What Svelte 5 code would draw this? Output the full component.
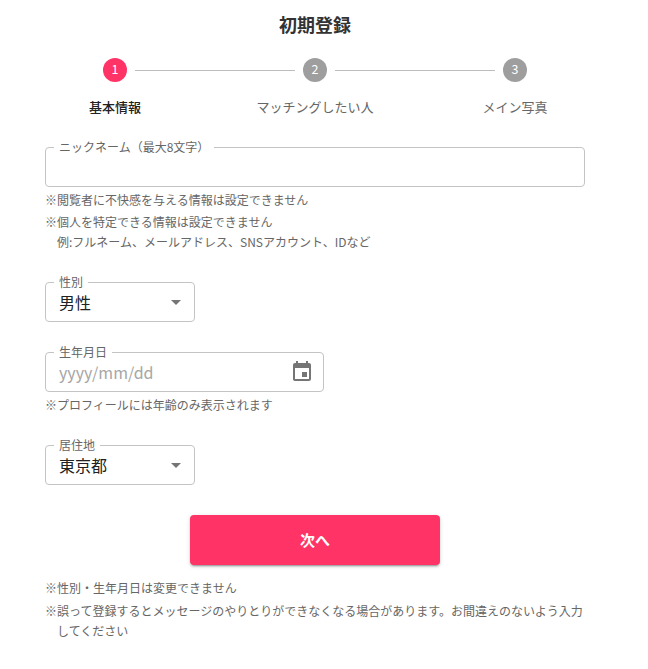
<script>
  const steps = ['基本情報', 'マッチングしたい人', 'メイン写真'];
  let nickname = $state('');
  let birthday = $state('');
</script>

<main>
  <h1>初期登録</h1>

  <ol class="stepper">
    {#each steps as label, i}
      <li class:active={i === 0}>
        <div class="track">
          <span class="line" class:hidden={i === 0}></span>
          <span class="circle">{i + 1}</span>
          <span class="line" class:hidden={i === steps.length - 1}></span>
        </div>
        <span class="label">{label}</span>
      </li>
    {/each}
  </ol>

  <form>
    <fieldset>
      <legend>ニックネーム（最大8文字）</legend>
      <div class="control"><input type="text" aria-label="ニックネーム" bind:value={nickname} /></div>
    </fieldset>
    <p class="note first">※閲覧者に不快感を与える情報は設定できません</p>
    <p class="note second">※個人を特定できる情報は設定できません<br />例:フルネーム、メールアドレス、SNSアカウント、IDなど</p>

    <fieldset class="select">
      <legend>性別</legend>
      <div class="control">
        <span class="value">男性</span>
        <svg viewBox="0 0 24 24" width="24" height="24"><path d="M7 10l5 5 5-5z" /></svg>
      </div>
    </fieldset>

    <fieldset class="date">
      <legend>生年月日</legend>
      <div class="control">
        <input type="text" placeholder="yyyy/mm/dd" aria-label="生年月日" bind:value={birthday} />
        <svg viewBox="0 0 24 24" width="24" height="24"><path d="M17 12h-5v5h5v-5zM16 1v2H8V1H6v2H5c-1.11 0-1.99.9-1.99 2L3 19c0 1.1.89 2 2 2h14c1.1 0 2-.9 2-2V5c0-1.1-.9-2-2-2h-1V1h-2zm3 18H5V8h14v11z" /></svg>
      </div>
    </fieldset>
    <p class="note first">※プロフィールには年齢のみ表示されます</p>

    <fieldset class="select">
      <legend>居住地</legend>
      <div class="control">
        <span class="value">東京都</span>
        <svg viewBox="0 0 24 24" width="24" height="24"><path d="M7 10l5 5 5-5z" /></svg>
      </div>
    </fieldset>

    <button type="button">次へ</button>

    <p class="note">※性別・生年月日は変更できません</p>
    <p class="note last">※誤って登録するとメッセージのやりとりができなくなる場合があります。お間違えのないよう入力してください</p>
  </form>
</main>

<style>
  :global(body) {
    background: #fff;
  }
  main {
    box-sizing: border-box;
    width: 630px;
    height: 669px;
    padding: 10px 15px 0;
    font-family: 'Noto Sans CJK JP', sans-serif;
    color: #333;
  }
  h1 {
    margin: 0;
    font-size: 18px;
    line-height: 28px;
    font-weight: 700;
    text-align: center;
  }
  .stepper {
    display: flex;
    margin: 20px 0 0;
    padding: 0;
    list-style: none;
  }
  li {
    flex: 1;
    text-align: center;
  }
  .track {
    display: flex;
    align-items: center;
    gap: 8px;
    height: 24px;
  }
  .line {
    flex: 1;
    height: 1px;
    background: #bdbdbd;
  }
  .hidden {
    visibility: hidden;
  }
  .circle {
    width: 24px;
    height: 24px;
    border-radius: 50%;
    background: #9e9e9e;
    color: #fff;
    font-size: 12.5px;
    line-height: 22px;
  }
  .label {
    display: block;
    margin-top: 15px;
    font-size: 13px;
    line-height: 19px;
    color: #666;
  }
  .active .circle {
    background: #ff3366;
  }
  .active .label {
    font-weight: 500;
    color: #212121;
  }
  form {
    margin: 31px 30px 0;
  }
  fieldset {
    box-sizing: border-box;
    height: 40px;
    min-width: 0;
    margin: 0;
    padding: 0;
    border: 1px solid #c4c4c4;
    border-radius: 4px;
  }
  /* a collapsed legend keeps the label centred on the outline */
  legend {
    height: 1px;
    margin-left: 8px;
    padding: 0 5px;
    font-size: 12px;
    line-height: 0;
    color: #666;
    white-space: nowrap;
  }
  .control {
    display: flex;
    align-items: center;
    height: 38px;
    padding: 0 6px 0 13px;
    font-size: 16px;
    color: #212121;
  }
  .value {
    flex: 1;
    line-height: 24px;
  }
  input {
    flex: 1;
    min-width: 0;
    height: 24px;
    margin: 0;
    padding: 0;
    border: 0;
    outline: 0;
    background: none;
    font: inherit;
    color: inherit;
  }
  input::placeholder {
    color: #a6a6a6;
    opacity: 1;
  }
  svg {
    flex: none;
    fill: #757575;
  }
  .select {
    width: 150px;
    margin-top: 30px;
  }
  .date {
    width: 279px;
    margin-top: 30px;
  }
  .date .control {
    padding-right: 9px;
  }
  .note {
    margin: 0;
    padding-left: 12px;
    text-indent: -12px;
    font-size: 12px;
    line-height: 20px;
    color: #666;
  }
  .first {
    margin-top: 3px;
  }
  .second {
    margin-top: 2px;
  }
  .last {
    margin-top: 3px;
  }
  button {
    display: block;
    width: 250px;
    height: 50px;
    margin: 30px auto 13px;
    padding: 0;
    border: 0;
    border-radius: 4px;
    background: #ff3366;
    box-shadow: 0 3px 1px -2px rgba(0, 0, 0, 0.2), 0 2px 2px rgba(0, 0, 0, 0.14), 0 1px 5px rgba(0, 0, 0, 0.12);
    font: 700 15px/50px 'Noto Sans CJK JP', sans-serif;
    color: #fff;
  }
</style>
